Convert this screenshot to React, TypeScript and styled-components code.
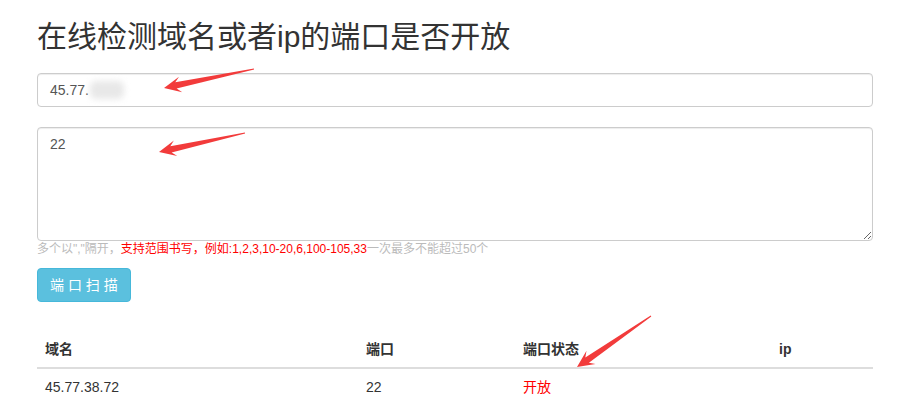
import React from "react";
import styled, { createGlobalStyle } from "styled-components";

const Global = createGlobalStyle`
  html, body { margin: 0; padding: 0; background: #fff; }
  body {
    font-family: "Liberation Sans", Arial, "Noto Sans CJK SC", sans-serif;
    font-size: 14px;
    line-height: 1.42857;
    color: #333;
  }
  * { box-sizing: border-box; }
`;

const Page = styled.div`
  position: relative;
  width: 904px;
  height: 414px;
  overflow: hidden;
`;

const Container = styled.div`
  width: 836px;
  margin-left: 37px;
  display: flex;
  flex-direction: column;
`;

const Title = styled.h2`
  margin: 20px 0 20px;
  font-size: 30px;
  font-weight: 400;
  line-height: 33px;
  color: #333;
  font-family: "Liberation Sans", Arial, "Noto Sans CJK SC", sans-serif;
`;

const InputBox = styled.div`
  height: 34px;
  border: 1px solid #ccc;
  border-radius: 4px;
  padding: 6px 12px;
  font-size: 14px;
  line-height: 20px;
  color: #555;
  display: flex;
  align-items: center;
  box-shadow: inset 0 1px 1px rgba(0, 0, 0, 0.075);
`;

const Blur = styled.span`
  display: inline-block;
  width: 34px;
  height: 18px;
  margin-left: 1px;
  background: #e8e8e8;
  border-radius: 6px;
  filter: blur(3px);
`;

const TextArea = styled.textarea`
  display: block;
  margin-top: 20px;
  width: 100%;
  height: 114px;
  border: 1px solid #ccc;
  border-radius: 4px;
  padding: 6px 12px;
  font-family: "Liberation Sans", Arial, "Noto Sans CJK SC", sans-serif;
  font-size: 14px;
  line-height: 20px;
  color: #555;
  box-shadow: inset 0 1px 1px rgba(0, 0, 0, 0.075);
  outline: none;
`;

const Help = styled.div`
  font-size: 12px;
  line-height: 17px;
  color: #bbb;
  white-space: nowrap;
`;

const Red = styled.span`
  color: #f00;
`;

const ButtonRow = styled.div`
  margin-top: 10px;
  display: flex;
`;

const Button = styled.button`
  height: 34px;
  padding: 6px 12px;
  background: #5bc0de;
  border: 1px solid #46b8da;
  border-radius: 4px;
  color: #fff;
  font-family: "Liberation Sans", Arial, "Noto Sans CJK SC", sans-serif;
  font-size: 14px;
  line-height: 20px;
  white-space: pre;
`;

const Table = styled.table`
  margin-top: 29px;
  width: 100%;
  border-collapse: collapse;
  table-layout: fixed;
`;

const Th = styled.th<{ $w?: number }>`
  width: ${(p) => (p.$w ? `${p.$w}px` : "auto")};
  text-align: left;
  padding: 8px;
  font-size: 14px;
  line-height: 20px;
  font-weight: 700;
  color: #333;
  border-bottom: 2px solid #ddd;
`;

const Td = styled.td<{ $red?: boolean }>`
  padding: 8px;
  font-size: 14px;
  line-height: 20px;
  color: ${(p) => (p.$red ? "#f00" : "#333")};
`;

const Overlay = styled.svg`
  position: absolute;
  left: 0;
  top: 0;
  pointer-events: none;
`;

type P = [number, number];

function arrowPath(tail: P, tip: P, headLen: number, headHalf: number, neckHalf: number): string {
  const dx = tip[0] - tail[0];
  const dy = tip[1] - tail[1];
  const len = Math.hypot(dx, dy);
  const ux = dx / len;
  const uy = dy / len;
  const nx = -uy;
  const ny = ux;
  const bx = tip[0] - ux * headLen;
  const by = tip[1] - uy * headLen;
  const nbx = tip[0] - ux * (headLen * 0.72);
  const nby = tip[1] - uy * (headLen * 0.72);
  const pts: P[] = [
    [tail[0] + nx * 0.6, tail[1] + ny * 0.6],
    [nbx + nx * neckHalf, nby + ny * neckHalf],
    [bx + nx * headHalf, by + ny * headHalf],
    tip,
    [bx - nx * headHalf, by - ny * headHalf],
    [nbx - nx * neckHalf, nby - ny * neckHalf],
    [tail[0] - nx * 0.6, tail[1] - ny * 0.6],
  ];
  return "M" + pts.map((p) => `${p[0].toFixed(1)},${p[1].toFixed(1)}`).join(" L") + " Z";
}

const Arrow: React.FC<{ tail: P; tip: P }> = ({ tail, tip }) => (
  <path d={arrowPath(tail, tip, 17, 8, 3.2)} fill="#f23b3b" />
);

export default function App() {
  return (
    <Page>
      <Global />
      <Container>
        <Title>在线检测域名或者ip的端口是否开放</Title>
        <InputBox>
          45.77.<Blur />
        </InputBox>
        <TextArea defaultValue="22" />
        <Help>
          多个以","隔开，<Red>支持范围书写，例如:1,2,3,10-20,6,100-105,33</Red>一次最多不能超过50个
        </Help>
        <ButtonRow>
          <Button>端 口 扫 描</Button>
        </ButtonRow>
        <Table>
          <thead>
            <tr>
              <Th $w={321}>域名</Th>
              <Th $w={157}>端口</Th>
              <Th $w={256}>端口状态</Th>
              <Th>ip</Th>
            </tr>
          </thead>
          <tbody>
            <tr>
              <Td>45.77.38.72</Td>
              <Td>22</Td>
              <Td $red>开放</Td>
              <Td></Td>
            </tr>
          </tbody>
        </Table>
      </Container>
      <Overlay width={904} height={414} viewBox="0 0 904 414">
        <Arrow tail={[254, 69]} tip={[164, 88]} />
        <Arrow tail={[245, 133]} tip={[159, 152]} />
        <Arrow tail={[651, 316]} tip={[577, 367]} />
      </Overlay>
    </Page>
  );
}
